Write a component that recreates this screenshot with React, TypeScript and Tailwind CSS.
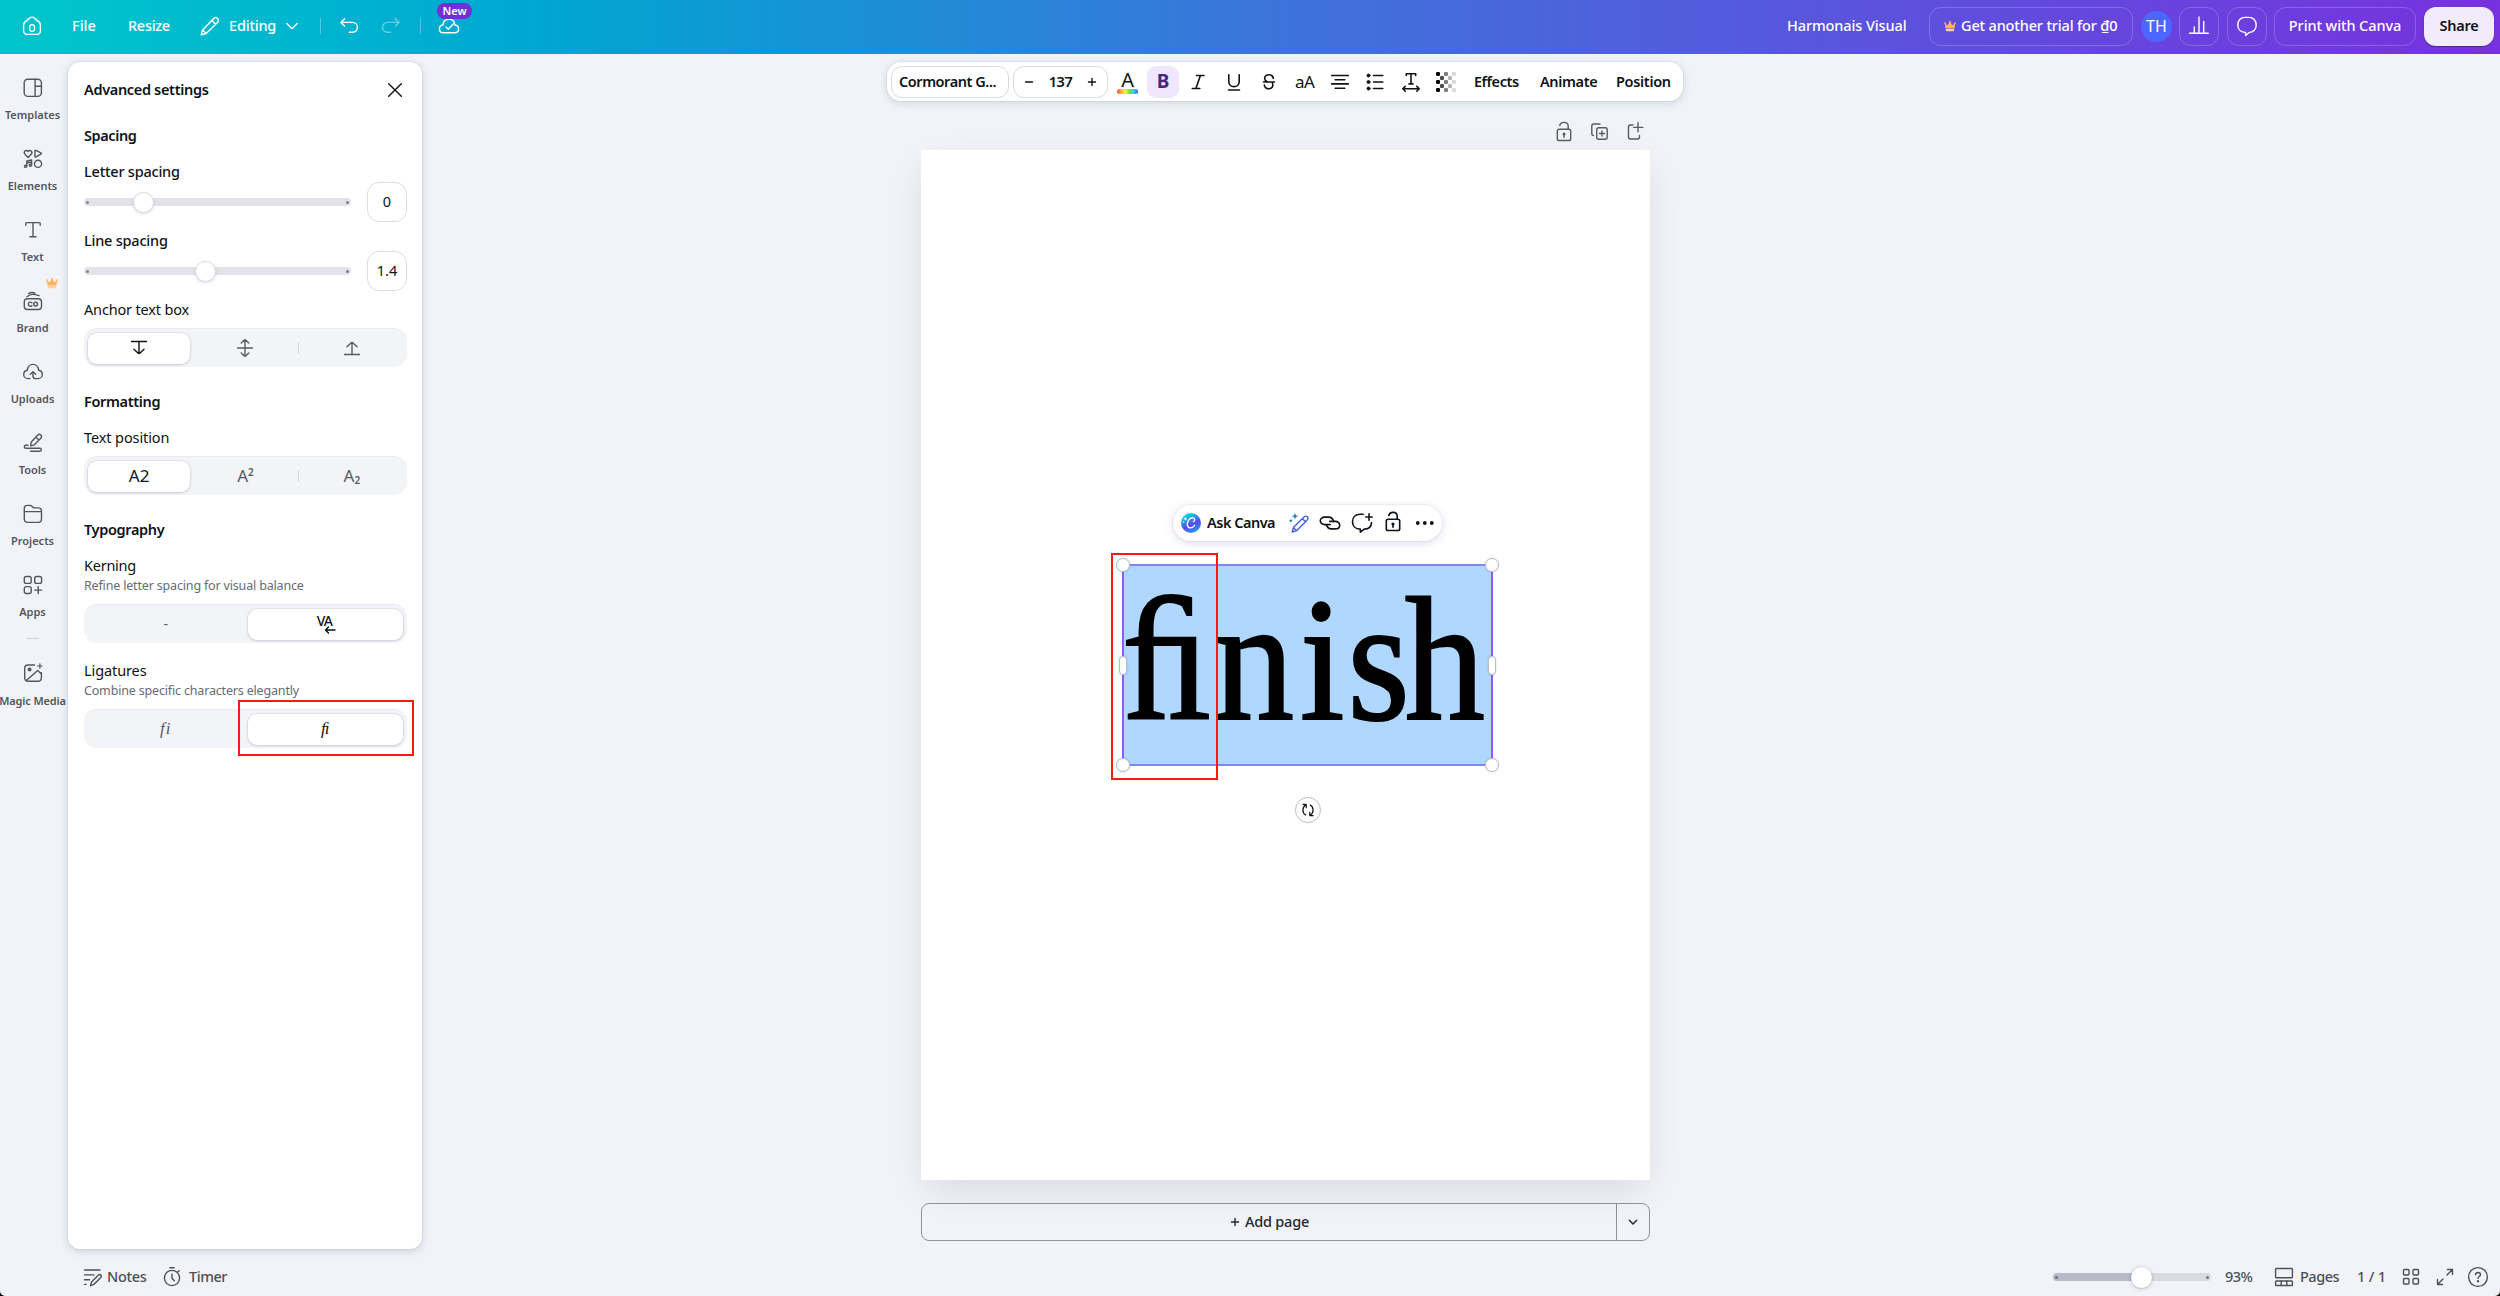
import { Fragment, ReactNode, useState } from 'react';
import clsx from 'clsx';

function Icon({
  children,
  size = 24,
  stroke = 1.4,
  className,
}: {
  children: ReactNode;
  size?: number;
  stroke?: number;
  className?: string;
}) {
  return (
    <svg
      width={size}
      height={size}
      viewBox="0 0 24 24"
      fill="none"
      stroke="currentColor"
      strokeWidth={stroke}
      strokeLinecap="round"
      strokeLinejoin="round"
      className={clsx('shrink-0', className)}
    >
      {children}
    </svg>
  );
}

function Crown({ className }: { className?: string }) {
  return (
    <svg width="12" height="11" viewBox="0 0 12 11" className={clsx('shrink-0', className)}>
      <path
        d="M1.6 7.6 0.9 3.2A.9.9 0 1 1 1.7 3l1.9 1.3L5.4 1.6a.9.9 0 1 1 1.2 0l1.8 2.7L10.3 3a.9.9 0 1 1 .8.2l-.7 4.4z"
        fill="#ffb45a"
      />
      <path d="M1.8 8h8.4v1.3a1 1 0 0 1-1 1H2.8a1 1 0 0 1-1-1z" fill="#ffd08f" />
    </svg>
  );
}

const navItems = [
  {
    label: 'Templates',
    icon: (
      <>
        <rect x="3.2" y="3.2" width="17.2" height="17.2" rx="3.6" />
        <path d="M14.1 3.2v17.2M14.1 10.3h6.3" />
      </>
    ),
  },
  {
    label: 'Elements',
    icon: (
      <>
        <path d="M7.1 10.4 4 7.2C2 5 5 1.9 7.1 4.4 9.2 1.9 12.2 5 10.2 7.2z" />
        <path d="M13.9 3.9c0-.6.5-.9 1-.6l5 2.6c.6.3.6.9 0 1.2l-5 2.7c-.5.3-1 0-1-.6z" />
        <circle cx="17" cy="16.8" r="3.6" />
        <path d="M5.8 19V14l4.8-1v5M5.8 16l4.8-1" />
        <circle cx="4.6" cy="19.2" r="1.1" />
        <circle cx="9.4" cy="18.2" r="1.1" />
      </>
    ),
  },
  {
    label: 'Text',
    icon: <path d="M4.8 7.3V5.6c0-.6.4-1 1-1h12.4c.6 0 1 .4 1 1v1.7M12 4.6v14.2M8.9 18.8h6.2" />,
  },
  {
    label: 'Brand',
    icon: (
      <>
        <rect x="3.3" y="9.7" width="17.2" height="10.8" rx="3.2" />
        <path d="M6 7.6c4.2-3 7-2.6 12-1M7.6 4.6c2.3-1.6 4-1.4 6.2-.6" />
        <path d="M10.9 13.7c-1.2-1-3.6-.9-3.6 1.4s2.4 2.5 3.6 1.5" />
        <circle cx="14.6" cy="15.1" r="1.9" />
      </>
    ),
  },
  {
    label: 'Uploads',
    icon: (
      <>
        <path d="M9 18.6H7c-2.4 0-4.3-1.9-4.3-4.2 0-2.2 1.6-3.9 3.7-4.2C6.6 6.8 9 4.4 12 4.4s5.4 2.4 5.6 5.8c2.1.3 3.7 2 3.7 4.2 0 2.3-1.9 4.2-4.3 4.2h-2.5c-1.5 0-2.5-1-2.5-2.5v-4" />
        <path d="m9.3 14.3 2.7-2.6 2.7 2.6" />
      </>
    ),
  },
  {
    label: 'Tools',
    icon: (
      <>
        <path d="M9.6 14.9 10.3 11l6.3-6.8c1-1 2.3-1 3.2-.2.9.9.9 2.2 0 3.2l-6.5 6.6zM14.9 6.1l3 3" />
        <path d="M7 14.2H5c-2.3 0-2.3 3.1 0 3.1h14c1.7 0 1.7 2.9 0 2.9H9.6" />
      </>
    ),
  },
  {
    label: 'Projects',
    icon: (
      <path d="M3.3 9.6h17.2M3.3 6.4c0-1.8 1.2-3 3-3h2.6c.8 0 1.5.3 2 .8l1 1c.5.5 1.2.7 1.9.7h3.4c2 0 3.3 1.3 3.3 3.2v8c0 2-1.3 3.3-3.3 3.3H6.6c-2 0-3.3-1.3-3.3-3.3z" />
    ),
  },
  {
    label: 'Apps',
    icon: (
      <>
        <rect x="3.3" y="3.5" width="6.9" height="6.9" rx="2" />
        <rect x="13.7" y="3.5" width="6.9" height="6.9" rx="2" />
        <rect x="3.3" y="13.6" width="6.9" height="6.9" rx="2" />
        <path d="M17.2 13.6v6.9M13.7 17.1h6.9" />
      </>
    ),
  },
];

const arrows = {
  top: <path d="M4.5 5.5h15M12 5.5v12M7 13.3l4.2 3.9c.5.4 1.1.4 1.6 0l4.2-3.9" />,
  middle: (
    <path d="M4.5 12h15M12 4.2v15.6M8.2 7l3.2-3c.4-.3.8-.3 1.2 0l3.2 3M8.2 17l3.2 3c.4.3.8.3 1.2 0l3.2-3" />
  ),
  bottom: <path d="M4.5 18.5h15M12 18.5v-12M7 10.7l4.2-3.9c.5-.4 1.1-.4 1.6 0l4.2 3.9" />,
};

function Slider({ knobClass }: { knobClass: string }) {
  return (
    <div className="relative flex h-2 w-[267px] items-center justify-between rounded-full bg-[#e1e3e8] px-[2px]">
      <span className="size-[3px] rounded-full bg-[#7b7f88]" />
      <span className="size-[3px] rounded-full bg-[#7b7f88]" />
      <span
        className={clsx(
          'absolute -top-[6.5px] size-[21px] rounded-full border border-[#d9dbe3] bg-white shadow-[0_1px_3px_rgba(64,79,109,0.2)]',
          knobClass
        )}
      />
    </div>
  );
}

function SpacingRow({ label, value, knobClass }: { label: string; value: string; knobClass: string }) {
  return (
    <div className="h-[69px]">
      <div className="h-5 text-[14.5px] leading-5 font-medium tracking-[-0.22px]">{label}</div>
      <div className="mt-px flex h-10 items-center justify-between">
        <Slider knobClass={knobClass} />
        <div className="-mr-px flex h-10 w-10 items-center justify-center rounded-[12px] border border-[#dbdde4] text-[14.5px]">
          {value}
        </div>
      </div>
    </div>
  );
}

function Segmented({ options, initial = 0 }: { options: ReactNode[]; initial?: number }) {
  const [selected, setSelected] = useState(initial);
  return (
    <div className="-mr-px flex h-[39px] items-center rounded-[13px] border-t border-[#ebecf2] bg-[#f3f4f7] px-1">
      {options.map((option, i) => (
        <Fragment key={i}>
          {i > 0 && (
            <span className="flex w-1 shrink-0 justify-center">
              {i !== selected && i - 1 !== selected && <span className="h-3 w-px bg-[#d5d7dd]" />}
            </span>
          )}
          <button
            type="button"
            onClick={() => setSelected(i)}
            className={clsx(
              'flex h-[31px] flex-1 basis-0 items-center justify-center rounded-[9px]',
              i === selected
                ? 'bg-white text-[#0e1318] shadow-[0_0_0_1px_rgba(64,79,109,0.07),0_1px_3px_rgba(64,79,109,0.2)]'
                : 'text-[#585b62]'
            )}
          >
            {option}
          </button>
        </Fragment>
      ))}
    </div>
  );
}

function Header() {
  return (
    <header className="flex h-[54px] shrink-0 items-start bg-[linear-gradient(90deg,#00c4cc_0%,#00c4cc_2%,#00a6d2_22%,#3b75da_50%,#5a54dd_74%,#7731de_100%)] font-medium text-white">
      <div className="flex h-[52px] w-full items-center text-[14.5px]">
        <Icon className="ml-5">
          <path d="M3.6 11c0-1.3.5-2.3 1.5-3.1l4.7-3.9c1.3-1 3.1-1 4.4 0L18.9 7.9c1 .8 1.5 1.8 1.5 3.1v5.7c0 2.3-1.5 3.7-3.7 3.7H7.3c-2.2 0-3.7-1.4-3.7-3.7z" />
          <rect x="9.7" y="10.7" width="4.8" height="6.7" rx="2.3" />
        </Icon>
        <span className="ml-7 w-[56px]">File</span>
        <span className="w-[70px] tracking-[-0.3px]">Resize</span>
        <Icon>
          <path d="M3.2 20.8 4.6 15.9 15.7 4.6c1.2-1.2 2.8-1.2 3.9-.1 1.1 1.1 1.1 2.7-.1 3.9L8.2 19.5zM13.9 6.5l3.7 3.7M4.6 15.9l3.6 3.6" />
        </Icon>
        <span className="ml-[7px] w-[51px] tracking-[-0.2px]">Editing</span>
        <Icon>
          <path d="m6.8 9.6 4.4 4.4c.5.5 1.1.5 1.6 0l4.4-4.4" />
        </Icon>
        <span className="ml-4 h-4 w-px bg-white/30" />
        <Icon className="ml-4">
          <path d="M7.6 4.8 4.3 7.9c-.4.4-.4.7 0 1.1l3.3 3.1M4.2 8.4h11.1c6.8 0 6.8 9.8 0 9.8h-3" />
        </Icon>
        <Icon className="ml-[18px] text-white/40">
          <path d="m16.4 4.8 3.3 3.1c.4.4.4.7 0 1.1l-3.3 3.1M19.8 8.4H8.7c-6.8 0-6.8 9.8 0 9.8h3" />
        </Icon>
        <span className="ml-[17px] h-4 w-px bg-white/30" />
        <div className="relative ml-4">
          <Icon>
            <path d="M6.7 18.7c-2.5 0-4.3-1.6-4.3-3.8 0-2.1 1.5-3.6 3.5-3.9.4-3.4 2.9-5.7 6-5.7s5.6 2.3 6 5.7c2.2.3 3.7 1.8 3.7 3.9 0 2.2-1.8 3.8-4.3 3.8zM9 12.9l2.3 2.3L16.2 10" />
          </Icon>
          <span className="absolute -top-[11px] left-0 h-4 w-[35px] rounded-lg bg-[#7230d4] text-center text-[11px] leading-4 font-semibold">
            New
          </span>
        </div>
        <span className="ml-auto w-[142px] shrink-0 tracking-[-0.1px]">Harmonais Visual</span>
        <button
          type="button"
          className="flex h-[39px] w-[204px] shrink-0 items-center rounded-[12px] border border-white/20 pl-[14px] font-medium tracking-[-0.16px] whitespace-nowrap"
        >
          <Crown className="mr-[5px]" />
          Get another trial for ₫0
        </button>
        <span className="ml-2 flex size-[31px] shrink-0 items-center justify-center rounded-full bg-[#4c66ff] text-[16px] font-normal">
          TH
        </span>
        <button
          type="button"
          className="ml-[7px] flex h-[39px] w-10 shrink-0 items-center justify-center rounded-[12px] border border-white/20"
        >
          <Icon>
            <path d="M2.5 19.2h18.8M7.3 19v-6M12 19V3M16.7 19V7.5" />
          </Icon>
        </button>
        <button
          type="button"
          className="ml-2 flex h-[39px] w-10 shrink-0 items-center justify-center rounded-[12px] border border-white/20"
        >
          <Icon>
            <path d="M10.6 18.4v3.2l3.6-3.2c4.2 0 7-3.3 7-7.4 0-4.4-2.9-7.6-7.2-7.6h-4C5.6 3.4 2.8 6.6 2.8 11c0 4.1 2.8 7.4 7.8 7.4z" />
          </Icon>
        </button>
        <button
          type="button"
          className="ml-[7px] h-[39px] w-[142px] shrink-0 rounded-[12px] border border-white/20 font-medium tracking-[-0.1px] whitespace-nowrap"
        >
          Print with Canva
        </button>
        <button
          type="button"
          className="mr-[6px] ml-2 h-[39px] w-[70px] shrink-0 rounded-[12px] bg-[#f1ebfc] font-semibold tracking-[-0.2px] text-[#0e1318] shadow-[0_1px_1px_rgba(0,0,0,0.3)]"
        >
          Share
        </button>
      </div>
    </header>
  );
}

function NavRail() {
  return (
    <nav className="flex w-[65px] shrink-0 flex-col items-center pt-[22px] text-[#53565d]">
      {navItems.map((item) => (
        <div key={item.label} className="relative flex h-[71px] w-full flex-col items-center">
          {item.label === 'Brand' && <Crown className="absolute -top-[11px] left-[46px]" />}
          <Icon>{item.icon}</Icon>
          <span className="mt-[7px] text-[11px] leading-4 font-semibold">{item.label}</span>
        </div>
      ))}
      <span className="mt-[-6px] h-px w-3 shrink-0 bg-[#cfd2da]" />
      <Icon className="mt-[22px]">
        <path d="M13.5 4H7.2C5 4 3.7 5.3 3.7 7.3v9.4C3.7 18.9 5 20.2 7.2 20.2h9.5c2.2 0 3.7-1.3 3.7-3.5v-5M5.6 19.3 16.7 9.5l3.5 3.3" />
        <circle cx="8.6" cy="8.6" r="1.3" fill="currentColor" />
        <path d="M18.9 2.8v4.4M16.7 5h4.4" strokeWidth="1.2" />
      </Icon>
      <span className="mt-[8px] text-[11px] leading-4 font-semibold tracking-[-0.15px] whitespace-nowrap">
        Magic Media
      </span>
    </nav>
  );
}

function SettingsPanel() {
  return (
    <aside className="mt-2 ml-[3px] h-[1187px] w-[354px] shrink-0 rounded-[12px] bg-white px-4 pt-[18px] text-[#0e1318] shadow-[0_0_0_1px_rgba(64,79,139,0.07),0_2px_8px_rgba(64,79,139,0.22)]">
      <div className="flex h-5 items-center justify-between text-[14.5px] font-semibold">
        <span className="tracking-[-0.33px]">Advanced settings</span>
        <Icon className="-mr-px">
          <path d="M5.7 5.7 18.3 18.3M18.3 5.7 5.7 18.3" />
        </Icon>
      </div>
      <div className="mt-[25px] h-[36px] text-[14.5px] leading-5 font-semibold tracking-[-0.4px]">Spacing</div>
      <SpacingRow label="Letter spacing" value="0" knobClass="left-[49px]" />
      <SpacingRow label="Line spacing" value="1.4" knobClass="left-[111px]" />
      <div className="h-[29px] text-[14.5px] leading-5 tracking-[-0.17px]">Anchor text box</div>
      <Segmented
        options={[
          <Icon>{arrows.top}</Icon>,
          <Icon>{arrows.middle}</Icon>,
          <Icon>{arrows.bottom}</Icon>,
        ]}
      />
      <div className="mt-[24px] h-[36px] text-[14.5px] leading-5 font-semibold tracking-[-0.35px]">Formatting</div>
      <div className="h-[29px] text-[14.5px] leading-5 tracking-[-0.1px]">Text position</div>
      <Segmented
        options={[
          <span className="text-[17px] font-normal">A2</span>,
          <span className="text-[17px]">
            A<span className="relative -top-[6px] text-[10px] font-semibold">2</span>
          </span>,
          <span className="text-[17px]">
            A<span className="relative top-[2px] text-[10px] font-semibold">2</span>
          </span>,
        ]}
      />
      <div className="mt-[24px] h-[36px] text-[14.5px] leading-5 font-semibold tracking-[-0.35px]">Typography</div>
      <div className="h-[21px] text-[14.5px] leading-5 tracking-[-0.25px]">Kerning</div>
      <div className="h-[28px] text-[12.5px] leading-5 tracking-[-0.17px] text-[#686b73]">
        Refine letter spacing for visual balance
      </div>
      <Segmented
        initial={1}
        options={[
          <span className="text-sm">-</span>,
          <span className="relative -top-[3px] -left-px text-[14px] leading-none font-medium tracking-[-1px]">
            VA
            <Icon size={12} stroke={3} className="absolute top-[10px] left-[7px]">
              <path d="M22 12H3M9 6l-6 6 6 6" />
            </Icon>
          </span>,
        ]}
      />
      <div className="mt-[17px] h-[21px] text-[14.5px] leading-5 tracking-[-0.1px]">Ligatures</div>
      <div className="h-[28px] text-[12.5px] leading-5 tracking-[-0.17px] text-[#686b73]">
        Combine specific characters elegantly
      </div>
      <div className="relative">
        <Segmented
          initial={1}
          options={[
            <span className="font-['Liberation_Serif',serif] text-[17px] tracking-[1px] italic">fi</span>,
            <span className="font-['Liberation_Serif',serif] text-[17px] italic">ﬁ</span>,
          ]}
        />
        <span className="absolute -top-[9px] left-[154px] h-14 w-[176px] border-2 border-[#fb1a10]" />
      </div>
    </aside>
  );
}

function Checker() {
  const cells = [
    [0, 0, 1], [8, 0, 0.5], [16, 0, 0.15],
    [4, 4, 0.7], [12, 4, 0.3],
    [0, 8, 1], [8, 8, 0.5], [16, 8, 0.15],
    [4, 12, 0.7], [12, 12, 0.3],
    [0, 16, 1], [8, 16, 0.5], [16, 16, 0.15],
  ];
  return (
    <svg width="20" height="20" viewBox="0 0 20 20">
      {cells.map(([x, y, opacity]) => (
        <rect key={`${x}-${y}`} x={x} y={y} width="4" height="4" rx="1.3" opacity={opacity} />
      ))}
    </svg>
  );
}

function Slot({ children, className }: { children: ReactNode; className?: string }) {
  return (
    <button
      type="button"
      className={clsx('mx-[2px] flex h-8 w-[31.4px] shrink-0 items-center justify-center rounded-[9px]', className)}
    >
      {children}
    </button>
  );
}

function Toolbar() {
  return (
    <div className="ml-[465px] flex h-[39px] w-[796px] shrink-0 items-center rounded-[14px] bg-white pl-1 text-[14.5px] font-semibold text-[#0e1318] shadow-[0_0_0_1px_rgba(64,79,139,0.06),0_2px_8px_rgba(64,79,139,0.2)]">
      <div className="flex h-8 w-[118px] items-center rounded-[11px] border border-[#d9dbe4] pl-[7px] tracking-[-0.45px] whitespace-nowrap">
        Cormorant G...
      </div>
      <div className="ml-1 flex h-8 w-[95px] items-center justify-between rounded-[11px] border border-[#d9dbe4] px-[9px] tracking-[-0.5px]">
        <Icon size={12} stroke={2.8}>
          <path d="M5 12h14" />
        </Icon>
        <span>137</span>
        <Icon size={12} stroke={2.8}>
          <path d="M5 12h14M12 5v14" />
        </Icon>
      </div>
      <Slot className="ml-1 flex-col">
        <span className="text-[20px] leading-[19px] font-normal">A</span>
        <span className="h-[5px] w-[21px] rounded-full bg-[linear-gradient(90deg,#ff4a3d,#ffb52e,#f3f03a,#5fe84b,#27d8e8,#2a62ff)]" />
      </Slot>
      <Slot className="bg-[#f0e7fe] text-[19px] font-bold text-[#46297e]">B</Slot>
      <Slot>
        <Icon stroke={1.6}>
          <path d="M10.5 5.5h7.5M6.3 18.5h7.5M14.4 5.5l-4.5 13" />
        </Icon>
      </Slot>
      <Slot>
        <Icon stroke={1.6}>
          <path d="M6.8 4.7v7c0 6.600 10.400 6.600 10.400 0v-7M6.500 20h11" />
        </Icon>
      </Slot>
      <Slot>
        <Icon stroke={1.6}>
          <path d="M16.3 8.5C15.9 3.6 7.6 3.6 7.6 8.3c0 1.6 1 2.7 2.6 3.5M6.5 12h11M15.5 13.5c2.2 6.5-8 7-8.2 1.5" />
        </Icon>
      </Slot>
      <Slot className="text-[17px] font-normal tracking-[-0.5px]">aA</Slot>
      <Slot>
        <Icon stroke={1.6}>
          <path d="M3.7 5.5h16.6M7.2 9.7h9.6M3.7 13.9h16.6M7.2 18.2h9.6" />
        </Icon>
      </Slot>
      <Slot>
        <Icon stroke={1.6}>
          <path d="M10.5 5.5h9.3M10.5 12h9.3M10.5 18.5h9.3" />
          <g fill="currentColor" strokeWidth="1">
            <circle cx="5.5" cy="5.5" r="1.5" />
            <circle cx="5.5" cy="12" r="1.5" />
            <circle cx="5.5" cy="18.5" r="1.5" />
          </g>
        </Icon>
      </Slot>
      <Slot>
        <Icon stroke={1.6}>
          <path d="M7.3 5.5V3.7h9.4v1.8M12 3.7v10M10 13.9h4M4.2 18.8h15.6M6.2 16.4l-2.4 2.4 2.4 2.4M17.8 16.4l2.4 2.4-2.4 2.4" />
        </Icon>
      </Slot>
      <Slot>
        <Checker />
      </Slot>
      <span className="ml-[10px] w-[66px] shrink-0 tracking-[-0.4px]">Effects</span>
      <span className="w-[76px] shrink-0 tracking-[-0.35px]">Animate</span>
      <span className="shrink-0 tracking-[-0.3px]">Position</span>
    </div>
  );
}

function LockIcon({ stroke = 1.4 }: { stroke?: number }) {
  return (
    <Icon stroke={stroke}>
      <rect x="5.3" y="9.3" width="13.4" height="11.2" rx="1.8" />
      <path d="M7.8 5.5c.8-4.4 8.4-4.2 8.4.6v3.2M12 14.2v3" />
      <circle cx="12" cy="14" r=".8" fill="currentColor" />
    </Icon>
  );
}

function FloatingMenu() {
  return (
    <div className="absolute top-[355px] left-[252px] flex h-9 w-[269px] items-center rounded-full bg-white pl-2 text-[#0e1318] shadow-[0_0_0_1px_rgba(64,79,139,0.05),0_2px_8px_rgba(64,79,139,0.2)]">
      <svg width="20" height="20" viewBox="0 0 20 20" className="shrink-0">
        <defs>
          <linearGradient id="ask" x1="0.2" y1="0" x2="0.7" y2="1">
            <stop offset="0.15" stopColor="#00cfd8" />
            <stop offset="0.6" stopColor="#5b49f0" />
            <stop offset="1" stopColor="#1fa5ee" />
          </linearGradient>
        </defs>
        <circle cx="10" cy="10" r="10" fill="url(#ask)" />
        <path
          d="M12.3 8.7c1.6-.3 2.2-3.5-.1-3.9C8.6 4.3 6 8.6 6.3 11.7c.3 3.9 4.8 4.3 7.3.7"
          fill="none"
          stroke="#fff"
          strokeWidth="1.3"
          strokeLinecap="round"
        />
        <path d="m4.4 3.8.6 1.5 1.5.6-1.5.6-.6 1.5-.6-1.5-1.5-.6 1.5-.6z" fill="#fff" />
        <circle cx="2.6" cy="9" r=".8" fill="#fff" />
      </svg>
      <span className="ml-[6px] w-[78px] shrink-0 text-[14.5px] font-semibold tracking-[-0.5px]">Ask Canva</span>
      <Icon className="ml-[2px] text-[#4563d6]">
        <path d="m5.2 21 1.2-4.5L17 5.9c1-1 2.4-1 3.3-.1.9.9.9 2.2-.1 3.2L9.6 19.7zM15.3 7.6l3.2 3.2M6.4 16.5l3.2 3.2" />
        <path d="m8 2 .9 2.300 2.300.9-2.300.9L8 8.400l-.9-2.300-2.300-.9 2.300-.9z" fill="#1583b8" stroke="none" />
        <circle cx="3.8" cy="9.8" r="1.3" fill="#1583b8" stroke="none" />
      </Icon>
      <Icon className="ml-[7px]" stroke={1.6}>
        <path d="M15.6 10.4C15 8 13.300 6.100 10.600 6.100H6.800C.8 6.100.8 13.600 6.800 13.600h5.400" />
        <path d="M8.400 13.800c.6 2.400 2.300 4.100 5 4.100h3.800c6 0 6-7.500 0-7.500h-5.400" />
      </Icon>
      <Icon className="ml-2" stroke={1.6}>
        <path d="M13.2 3.3h-3C5.5 3.3 2.5 6.4 2.5 10.7c0 4.2 2.8 7.4 7.8 7.4v3l3.9-3c4.5 0 7.2-2.7 7.3-6.6M19 2.8v6.4M15.8 6h6.4" />
      </Icon>
      <div className="-mt-[3px] ml-[7px]">
        <LockIcon stroke={1.6} />
      </div>
      <Icon className="ml-2" stroke={0}>
        <g fill="currentColor">
          <circle cx="4.8" cy="12" r="1.9" />
          <circle cx="11.8" cy="12" r="1.9" />
          <circle cx="18.8" cy="12" r="1.9" />
        </g>
      </Icon>
    </div>
  );
}

function Handle({ className }: { className: string }) {
  return (
    <span
      className={clsx(
        'absolute border border-[#b9bccb] bg-white shadow-[0_0_2px_rgba(57,76,96,0.25)]',
        className
      )}
    />
  );
}

function Canvas() {
  return (
    <div className="relative h-[1030px] w-[729px] bg-white shadow-[0_12px_36px_-6px_rgba(14,19,24,0.12)]">
      <FloatingMenu />
      <div className="absolute top-[414px] left-[201px] h-[202px] w-[371px] border-2 border-[#8b5cf8] border-y-[#7f86fb] bg-[#b0d7fe]">
        <div className="-ml-[2px] flex origin-[0_150px] scale-y-110 font-['Liberation_Serif',serif] text-[160px] leading-[198px] whitespace-nowrap text-black [-webkit-text-stroke:2px_black]">
          <span>ﬁ</span>
          <span className="ml-[3px]">n</span>
          <span className="ml-[6px]">i</span>
          <span className="ml-[3px]">s</span>
          <span className="-ml-[5px]">h</span>
        </div>
        <Handle className="-top-2 -left-2 size-[14px] rounded-full" />
        <Handle className="-top-2 -right-2 size-[14px] rounded-full" />
        <Handle className="-bottom-2 -left-2 size-[14px] rounded-full" />
        <Handle className="-right-2 -bottom-2 size-[14px] rounded-full" />
        <Handle className="top-[90px] -left-[5px] h-[19px] w-2 rounded-full" />
        <Handle className="top-[90px] -right-[5px] h-[19px] w-2 rounded-full" />
      </div>
      <span className="absolute top-[403px] left-[190px] h-[227px] w-[107px] border-2 border-[#fb1a10]" />
      <span className="absolute top-[647px] left-[374px] flex size-[26px] items-center justify-center rounded-full border border-[#b9bccb] bg-white text-[#0e1318]">
        <Icon size={16} stroke={1.8}>
          <path d="M8.5 19.5C3 16 3 8 8.5 4.5M4.5 3.5h4.8v5M15.5 4.5c5.5 3.5 5.5 11.5 0 15M19.5 20.5h-4.8v-5" />
        </Icon>
      </span>
    </div>
  );
}

function Footer() {
  return (
    <footer className="flex h-[38px] shrink-0 items-start text-[14.5px] font-medium text-[#4d5057]">
      <div className="flex h-[38px] w-full items-center pl-20 whitespace-nowrap">
        <Icon>
          <path d="M4.5 5h15.5M4.5 9.9h9.5M4.5 14.8h5M4.5 19.4h1.6" />
          <path d="m10.5 20.7 1-3.6 7-7c1.7-1.6 3.9.6 2.3 2.3l-7 7z" />
        </Icon>
        <span className="ml-[3px] w-[53px] tracking-[-0.3px]">Notes</span>
        <Icon>
          <circle cx="12" cy="13" r="7.6" />
          <path d="M9.8 2.7h4.4M12 9.2v4l2.3 2.6M17.8 7l1.3-1.3" />
        </Icon>
        <span className="ml-[5px] tracking-[-0.45px]">Timer</span>
        <div className="relative ml-auto flex h-2 w-[158px] items-center justify-between rounded-full bg-[linear-gradient(90deg,#b7bbc7_55%,#d8dbe1_55%)] px-[2px]">
          <span className="size-[3px] rounded-full bg-[#6d717c]" />
          <span className="size-[3px] rounded-full bg-[#6d717c]" />
          <span className="absolute -top-[6.5px] left-[78px] size-[21px] rounded-full bg-white shadow-[0_0_0_1px_rgba(64,79,109,0.08),0_1px_4px_rgba(64,79,109,0.25)]" />
        </div>
        <span className="ml-[14px] w-[47px] tracking-[-0.6px]">93%</span>
        <Icon>
          <rect x="3.6" y="3.5" width="16.8" height="9.3" rx=".8" />
          <rect x="3.6" y="16" width="16.8" height="4.5" rx=".8" />
          <path d="M9.2 16v4.5M14.8 16v4.5" />
        </Icon>
        <span className="ml-[4px] w-[57px] tracking-[-0.5px]">Pages</span>
        <span className="w-[42px] tracking-[-0.15px]">1 / 1</span>
        <Icon>
          <rect x="4.5" y="4.5" width="5.5" height="5.5" rx="1" />
          <rect x="14" y="4.5" width="5.5" height="5.5" rx="1" />
          <rect x="4.5" y="13.5" width="5.5" height="5.5" rx="1" />
          <rect x="14" y="13.5" width="5.5" height="5.5" rx="1" />
        </Icon>
        <Icon className="ml-[10px]">
          <path d="M14.5 4.5h5v5M19 5l-5 5M9.5 19.5h-5v-5M5 19l5-5" />
        </Icon>
        <Icon className="mr-[10px] ml-[9px]">
          <circle cx="12" cy="12" r="9.4" />
          <path d="M9.5 9.7c.2-3 5-3 5 0 0 1.8-2.5 1.9-2.5 3.6" />
          <circle cx="12" cy="16.2" r=".5" fill="currentColor" />
        </Icon>
      </div>
    </footer>
  );
}

export default function App() {
  return (
    <div className="h-[1296px] w-[2500px] bg-black">
      <div className="flex h-full w-full flex-col overflow-hidden rounded-b-[5px] bg-[#f2f3f8] font-['Noto_Sans',sans-serif]">
        <Header />
        <div className="flex h-[1204px] shrink-0">
          <NavRail />
          <SettingsPanel />
          <main className="flex flex-1 flex-col pt-2">
            <Toolbar />
            <div className="ml-[499px] flex w-[729px] flex-col">
              <div className="flex h-[49px] items-center justify-end gap-3 pt-[13px] pr-[2px] text-[#585b62]">
                <LockIcon />
                <Icon>
                  <rect x="8.7" y="7.7" width="10.5" height="11.5" rx="2" />
                  <path d="M5.5 15.5c-1 0-1.7-.7-1.7-1.7V6c0-1.2.8-2 2-2H12M14 11v5M11.5 13.5h5" />
                </Icon>
                <Icon>
                  <path d="M9 5H6.5C5.3 5 4.5 5.8 4.5 7v10c0 1.2.8 2 2 2h7c1.2 0 2-.8 2-2v-1.5M14 2.8v9M9.6 7.4h9.2" />
                </Icon>
              </div>
              <Canvas />
              <div className="mt-[23px] flex h-[38px] items-center rounded-[8px] border border-[#90939d] text-[14.5px] font-medium text-[#24272c]">
                <button type="button" className="flex h-full flex-1 items-center justify-center tracking-[-0.2px]">
                  <Icon size={12} stroke={2.8} className="mr-1">
                    <path d="M5 12h14M12 5v14" />
                  </Icon>
                  Add page
                </button>
                <button
                  type="button"
                  className="flex h-full w-[33px] items-center justify-center border-l border-[#90939d]"
                >
                  <Icon size={16} stroke={2.2}>
                    <path d="m6.5 9.5 5.5 5.5 5.5-5.5" />
                  </Icon>
                </button>
              </div>
            </div>
          </main>
        </div>
        <Footer />
      </div>
    </div>
  );
}
